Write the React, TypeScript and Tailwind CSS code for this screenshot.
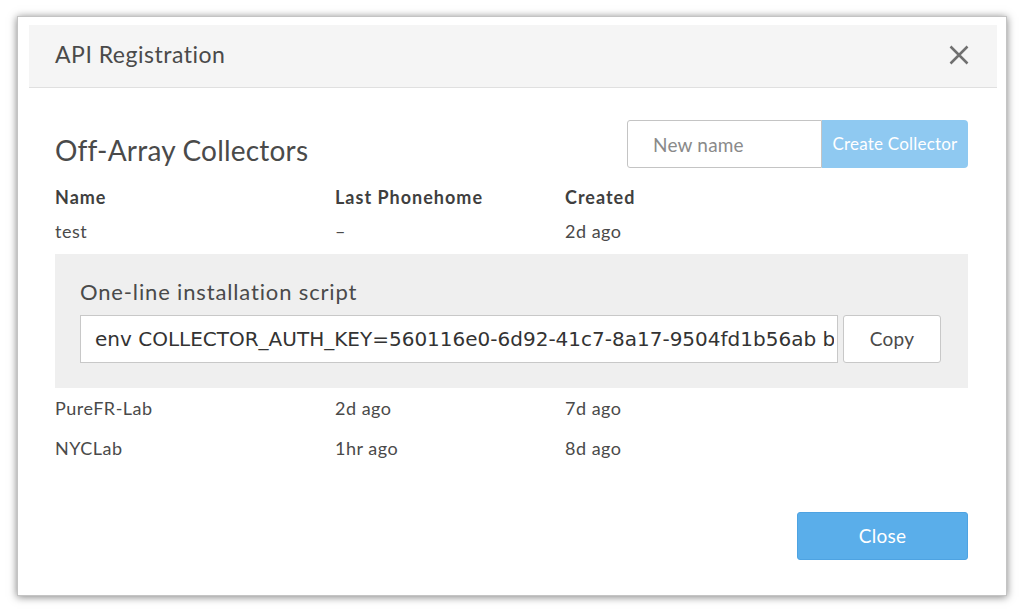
import { useState } from "react";

const COLLECTORS = [
  { name: "PureFR-Lab", phonehome: "2d ago", created: "7d ago" },
  { name: "NYCLab", phonehome: "1hr ago", created: "8d ago" },
];

const SCRIPT =
  "env COLLECTOR_AUTH_KEY=560116e0-6d92-41c7-8a17-9504fd1b56ab bash -c \"$(curl -fsSL https://collector.example/install.sh)\"";

const FONT = "font-['Lato','Noto_Sans',sans-serif]";

export default function App() {
  const [name, setName] = useState("");

  return (
    <div className={`w-[1024px] h-[612px] bg-white pl-[17px] pt-[16px] ${FONT}`}>
      <div className="w-[990px] h-[580px] bg-white border border-[#c4c4c4] shadow-[0_1px_8px_rgba(0,0,0,0.5)] pl-[11px] pr-[9px] pt-[8px] flex flex-col">
        {/* header */}
        <div className="h-[63px] bg-[#f5f5f5] border-b border-[#e0e0e0] pl-[26px] pr-[28px] pb-[3px] flex items-center justify-between">
          <div className="text-[23px] tracking-[0.5px] text-[#4a4a4a]">API Registration</div>
          <svg width="20" height="20" viewBox="0 0 20 20">
            <path d="M1.5 1.5 L18.5 18.5 M18.5 1.5 L1.5 18.5" stroke="#707070" strokeWidth="2.5" />
          </svg>
        </div>

        <div className="pl-[26px] pr-[29px] pt-[32px] text-[#4a4a4a] flex flex-col">
          <div className="flex justify-between items-start">
            <div className="text-[28px] tracking-[0.2px] mt-[13px] leading-[34px]">Off-Array Collectors</div>
            <div className="flex h-[48px]">
              <input
                value={name}
                onChange={(e) => setName(e.target.value)}
                placeholder="New name"
                className="w-[195px] h-full border border-[#c4c4c4] rounded-l-[3px] px-[25px] text-[19px] tracking-[0.2px] text-[#4a4a4a] placeholder:text-[#8a8a8a] outline-none"
              />
              <button className="w-[146px] h-full bg-[#8fc9f1] rounded-r-[4px] text-white text-[17px] tracking-[0.2px]">
                Create Collector
              </button>
            </div>
          </div>

          <div className="grid grid-cols-[280px_230px_1fr] mt-[12px] h-[34px] items-center text-[18px] tracking-[1px] font-bold text-[#3f3f3f]">
            <div>Name</div>
            <div>Last Phonehome</div>
            <div>Created</div>
          </div>
          <div className="grid grid-cols-[280px_230px_1fr] h-[34px] items-center text-[18px] tracking-[0.5px]">
            <div>test</div>
            <div>–</div>
            <div>2d ago</div>
          </div>

          <div className="mt-[6px] h-[134px] bg-[#efefef] pl-[25px] pr-[27px] pt-[26px] flex flex-col">
            <div className="text-[22px] tracking-[0.85px] leading-[24px] text-[#4a4a4a]">One-line installation script</div>
            <div className="flex gap-[5px] mt-[11px] h-[48px]">
              <input
                readOnly
                value={SCRIPT}
                className="flex-1 min-w-0 h-full bg-white border border-[#c8c8c8] pl-[14px] pr-[3px] text-[20px] text-[#333] font-['DejaVu_Sans',sans-serif] outline-none"
              />
              <button className="w-[98px] h-full bg-white border border-[#c8c8c8] rounded-[3px] text-[19px] tracking-[0.3px] text-[#4a4a4a]">
                Copy
              </button>
            </div>
          </div>

          {COLLECTORS.map((c) => (
            <div
              key={c.name}
              className="grid grid-cols-[280px_230px_1fr] h-[40px] items-center text-[18px] tracking-[0.5px]"
            >
              <div>{c.name}</div>
              <div>{c.phonehome}</div>
              <div>{c.created}</div>
            </div>
          ))}

          <div className="flex justify-end mt-[44px]">
            <button className="w-[171px] h-[48px] bg-[#5aaeea] border border-[#4ea3e2] rounded-[3px] text-white text-[19px] tracking-[0.3px]">
              Close
            </button>
          </div>
        </div>
      </div>
    </div>
  );
}
